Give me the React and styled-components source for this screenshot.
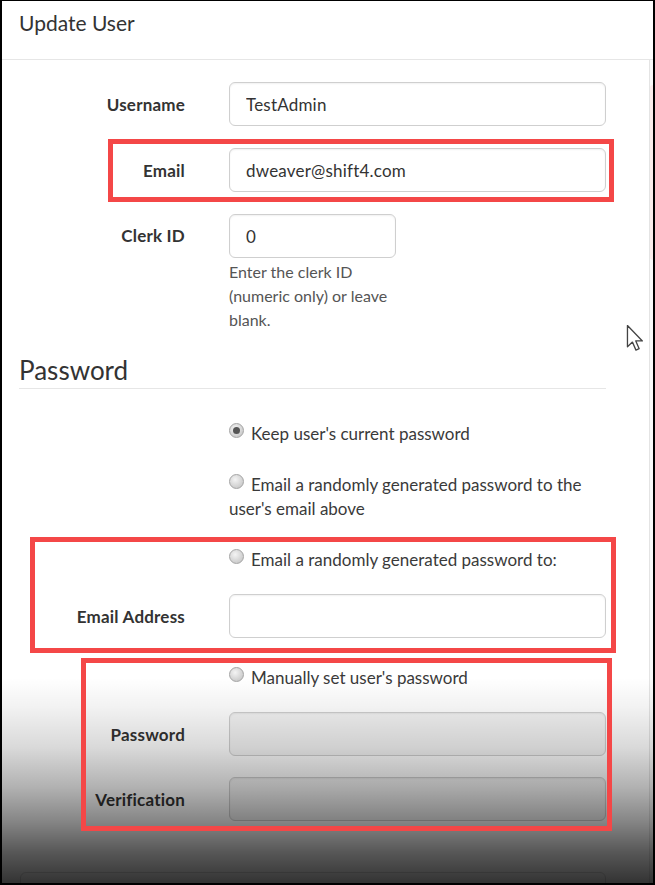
import React from "react";
import styled, { createGlobalStyle } from "styled-components";

const GlobalStyle = createGlobalStyle`
  html, body { margin: 0; padding: 0; background: #fff; }
  body { font-family: Lato, "Open Sans", "Liberation Sans", sans-serif; }
  * { box-sizing: border-box; }
`;

const Frame = styled.div`
  position: relative;
  width: 655px;
  height: 885px;
  border: 2px solid #000;
  border-top-width: 1px;
  background: #fff;
  overflow: hidden;
  color: #333;
`;

const Header = styled.div`
  height: 59px;
  padding: 9px 0 0 17px;
  border-bottom: 1px solid #e6e6e6;
`;

const Title = styled.h1`
  margin: 0;
  font-size: 21px;
  line-height: 1.2;
  font-weight: 400;
  color: #333;
`;

const Body = styled.div`
  display: flex;
`;

const Main = styled.div`
  flex: 1;
  display: flex;
  flex-direction: column;
  padding-top: 22px;
`;

const SideEdge = styled.div`
  width: 4px;
  border-left: 1px solid #e4e4e4;
  background: #fafafa;
  padding-top: 25px;
`;

const SideTab = styled.div`
  height: 175px;
  background: #fbecec;
  border-radius: 3px 0 0 3px;
`;

const Highlight = styled.div`
  position: relative;
  margin-top: ${(p) => p.$mt || 0}px;
  &::after {
    content: "";
    position: absolute;
    top: ${(p) => p.$box.t}px;
    right: ${(p) => p.$box.r}px;
    bottom: ${(p) => p.$box.b}px;
    left: ${(p) => p.$box.l}px;
    border: 5px solid #f44747;
    z-index: 2;
    pointer-events: none;
  }
`;

const Row = styled.div`
  display: grid;
  grid-template-columns: 183px 377px;
  column-gap: 44px;
  align-items: ${(p) => (p.$top ? "start" : "center")};
  margin-top: ${(p) => p.$mt || 0}px;
`;

const Label = styled.label`
  text-align: right;
  font-weight: 700;
  font-size: 17px;
  letter-spacing: 0.2px;
  color: #333;
  align-self: ${(p) => (p.$top ? "start" : "center")};
  padding-top: ${(p) => (p.$top ? "11px" : "0")};
`;

const Input = styled.input`
  display: block;
  width: ${(p) => (p.$narrow ? "167px" : "100%")};
  height: 44px;
  padding: 0 16px;
  border: 1px solid #cfcfcf;
  border-radius: 6px;
  box-shadow: inset 0 1px 2px rgba(0, 0, 0, 0.06);
  background: ${(p) => (p.disabled ? "#f4f4f4" : "#fff")};
  font-family: Lato, "Open Sans", "Liberation Sans", sans-serif;
  font-size: 17px;
  letter-spacing: 0.2px;
  color: #333;
  outline: none;
`;

const Help = styled.div`
  width: 167px;
  margin-top: 2px;
  font-size: 16px;
  line-height: 24px;
  color: #555;
`;

const SectionTitle = styled.h2`
  margin: 23px 43px 0 17px;
  padding-bottom: 2px;
  border-bottom: 1px solid #e6e6e6;
  font-size: 26px;
  line-height: 1.2;
  font-weight: 400;
  color: #333;
`;

const RadioLine = styled.div`
  grid-column: 2;
  font-size: 17px;
  line-height: 24px;
  color: #3a3a3a;
`;

const RadioDot = styled.span`
  display: inline-block;
  width: 15px;
  height: 15px;
  margin-right: 7px;
  vertical-align: 2px;
  border-radius: 50%;
  border: 1px solid #a4a4a4;
  background: radial-gradient(circle at 40% 35%, #f4f4f4 0%, #d6d6d6 55%, #bebebe 100%);
  position: relative;
  &::after {
    content: "";
    display: ${(p) => (p.$checked ? "block" : "none")};
    position: absolute;
    left: 3px;
    top: 3px;
    width: 7px;
    height: 7px;
    border-radius: 50%;
    background: #555;
  }
`;

const FooterBox = styled.div`
  margin: 51px 43px 0 18px;
  height: 40px;
  border: 1px solid #dcdcdc;
  border-radius: 6px;
  background: #fff;
`;

const Shade = styled.div`
  position: absolute;
  left: 0;
  right: 0;
  bottom: 0;
  height: 205px;
  z-index: 1;
  pointer-events: none;
  background: linear-gradient(
    to bottom,
    rgba(0, 0, 0, 0) 0%,
    rgba(0, 0, 0, 0.05) 14%,
    rgba(0, 0, 0, 0.15) 34%,
    rgba(0, 0, 0, 0.3) 53%,
    rgba(0, 0, 0, 0.48) 70%,
    rgba(0, 0, 0, 0.66) 85%,
    rgba(0, 0, 0, 0.8) 100%
  );
`;

const Cursor = styled.svg`
  position: absolute;
  left: 624px;
  top: 323px;
  z-index: 3;
`;

function Radio({ checked, children }) {
  return (
    <RadioLine>
      <RadioDot $checked={checked} />
      {children}
    </RadioLine>
  );
}

export default function App() {
  return (
    <>
      <GlobalStyle />
      <Frame>
        <Header>
          <Title>Update User</Title>
        </Header>
        <Body>
          <Main>
            <Row>
              <Label>Username</Label>
              <Input defaultValue="TestAdmin" />
            </Row>
            <Highlight $mt={22} $box={{ t: -9, r: 35, b: -10, l: 106 }}>
              <Row>
                <Label>Email</Label>
                <Input defaultValue="dweaver@shift4.com" />
              </Row>
            </Highlight>
            <Row $mt={22} $top>
              <Label $top>Clerk ID</Label>
              <div>
                <Input $narrow defaultValue="0" />
                <Help>Enter the clerk ID (numeric only) or leave blank.</Help>
              </div>
            </Row>

            <SectionTitle>Password</SectionTitle>

            <Row $mt={33}>
              <Radio checked>Keep user's current password</Radio>
            </Row>
            <Row $mt={27}>
              <Radio>Email a randomly generated password to the user's email above</Radio>
            </Row>
            <Highlight $mt={27} $box={{ t: -11, r: 33, b: -15, l: 28 }}>
              <Row>
                <Radio>Email a randomly generated password to:</Radio>
              </Row>
              <Row $mt={22}>
                <Label>Email Address</Label>
                <Input />
              </Row>
            </Highlight>
            <Highlight $mt={28} $box={{ t: -8, r: 37, b: -10, l: 79 }}>
              <Row>
                <Radio>Manually set user's password</Radio>
              </Row>
              <Row $mt={22}>
                <Label>Password</Label>
                <Input disabled type="password" />
              </Row>
              <Row $mt={21}>
                <Label>Verification</Label>
                <Input disabled type="password" />
              </Row>
            </Highlight>
            <FooterBox />
          </Main>
          <SideEdge>
            <SideTab />
          </SideEdge>
        </Body>
        <Shade />
        <Cursor width="19" height="28" viewBox="0 0 13 19">
          <path
            d="M1 1 L1 15.5 L4.4 12.3 L6.8 17.8 L9 16.8 L6.7 11.5 L11.2 11.5 Z"
            fill="#fff"
            stroke="#444"
            strokeWidth="0.9"
            strokeLinejoin="round"
          />
        </Cursor>
      </Frame>
    </>
  );
}
